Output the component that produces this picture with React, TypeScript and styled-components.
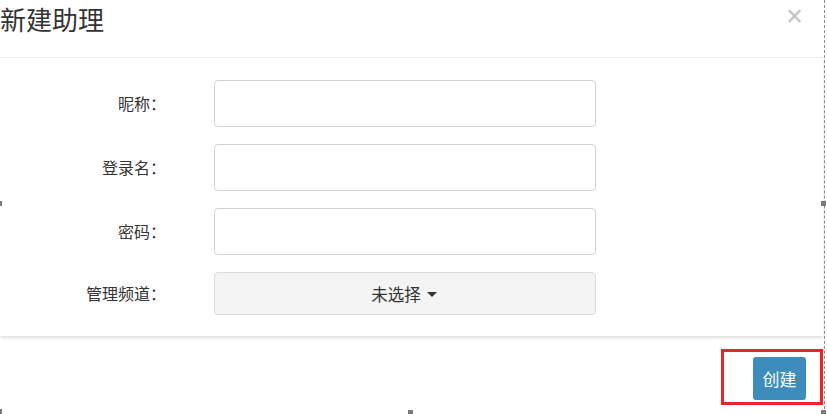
import styled, { createGlobalStyle } from 'styled-components';

const GlobalStyle = createGlobalStyle`
  html, body {
    margin: 0;
    padding: 0;
    background: #fff;
  }
  body {
    font-family: "Noto Sans CJK SC", "Noto Sans", sans-serif;
    color: #333;
  }
`;

const Stage = styled.div`
  position: relative;
  width: 827px;
  height: 414px;
  overflow: hidden;
  background: #fff;
`;

const Header = styled.div`
  height: 57px;
  border-bottom: 1px solid #eeeeee;
  display: flex;
  align-items: flex-start;
  justify-content: space-between;
  padding-right: 20px;
  margin-right: 4px;
`;

const Title = styled.h4`
  margin: 0;
  padding-top: 4px;
  font-size: 26px;
  line-height: 30px;
  font-weight: 400;
  color: #333;
`;

const Close = styled.button`
  border: none;
  background: transparent;
  padding: 0;
  margin-top: 3px;
  font-family: "Liberation Sans", Arial, sans-serif;
  font-size: 29px;
  line-height: 26px;
  font-weight: 400;
  color: #c4c4c4;
  cursor: pointer;
`;

const Body = styled.div`
  padding: 22px 0 21px;
  margin-right: 4px;
  box-shadow: 0 2px 3px rgba(0, 0, 0, 0.13);
  display: flex;
  flex-direction: column;
  gap: 17px;
`;

const Row = styled.div`
  display: flex;
  align-items: center;
`;

const Label = styled.label`
  width: 166px;
  text-align: right;
  font-size: 16px;
  color: #333;
  padding-right: 48px;
  margin-top: -2px;
  box-sizing: content-box;
`;

const Input = styled.input`
  width: 382px;
  height: 47px;
  box-sizing: border-box;
  border: 1px solid #d2d2d2;
  border-radius: 4px;
  outline: none;
  background: #fff;
  padding: 6px 12px;
  font-size: 14px;
`;

const Select = styled.button`
  width: 382px;
  height: 43px;
  box-sizing: border-box;
  border: 1px solid #dcdcdc;
  border-radius: 4px;
  background: #f4f4f4;
  font-family: inherit;
  font-size: 16.5px;
  color: #333;
  display: flex;
  align-items: center;
  justify-content: center;
  gap: 6px;
  padding-right: 8px;
`;

const Caret = styled.span`
  width: 0;
  height: 0;
  border-left: 5px solid transparent;
  border-right: 5px solid transparent;
  border-top: 5px solid #333;
  margin-top: 2px;
`;

const Footer = styled.div`
  display: flex;
  justify-content: flex-end;
  padding: 13px 4px 0 0;
`;

const Highlight = styled.div`
  border: 3px solid #e8262a;
  padding: 5px 14px 2px 29px;
`;

const PrimaryButton = styled.button`
  width: 53px;
  height: 43px;
  border: none;
  border-radius: 3px;
  background: #3c8dbc;
  color: #fff;
  font-family: inherit;
  font-size: 17px;
  cursor: pointer;
`;

const DashedEdge = styled.div`
  position: absolute;
  top: 0;
  bottom: 0;
  left: 824px;
  border-left: 1px dashed #8a8a8a;
`;

const Handle = styled.span<{ $x: number; $y: number }>`
  position: absolute;
  left: ${p => p.$x}px;
  top: ${p => p.$y}px;
  width: 5px;
  height: 5px;
  background: #7a7a7a;
`;

const fields = ['昵称：', '登录名：', '密码：'];

const App = () => {
  return (
    <>
      <GlobalStyle />
      <Stage>
        <Header>
          <Title>新建助理</Title>
          <Close>×</Close>
        </Header>
        <Body>
          {fields.map(f => (
            <Row key={f}>
              <Label>{f}</Label>
              <Input type={f === '密码：' ? 'password' : 'text'} />
            </Row>
          ))}
          <Row>
            <Label>管理频道：</Label>
            <Select>
              未选择<Caret />
            </Select>
          </Row>
        </Body>
        <Footer>
          <Highlight>
            <PrimaryButton>创建</PrimaryButton>
          </Highlight>
        </Footer>
        <DashedEdge />
        <Handle $x={-3} $y={201} />
        <Handle $x={821} $y={201} />
        <Handle $x={-3} $y={409} />
        <Handle $x={408} $y={410} />
        <Handle $x={821} $y={410} />
      </Stage>
    </>
  );
};

export default App;
